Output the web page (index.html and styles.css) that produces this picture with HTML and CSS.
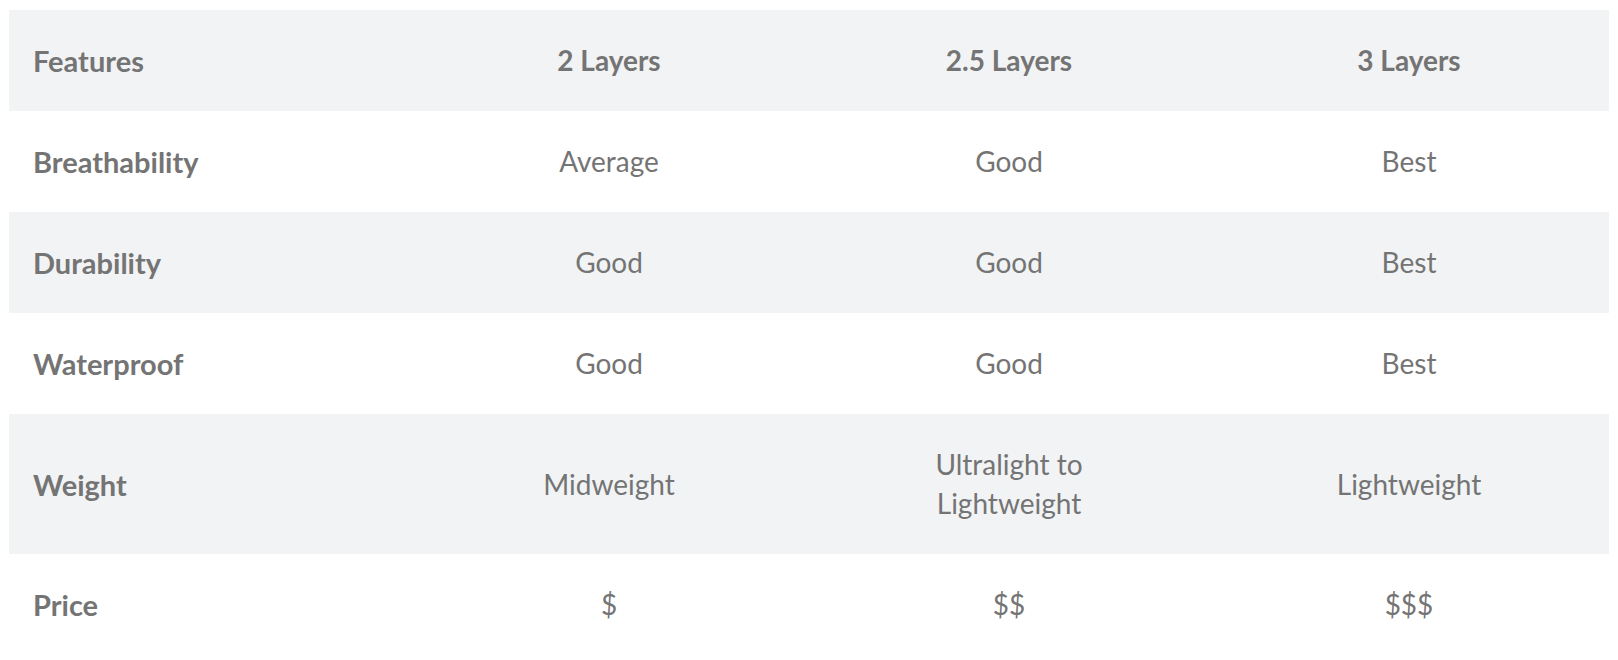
FILE: index.html
```html
<!DOCTYPE html>
<html>
<head>
<meta charset="utf-8">
<link rel="stylesheet" href="styles.css">
</head>
<body>
<table class="compare">
  <tr class="row shaded">
    <th class="feature">Features</th>
    <th class="val">2 Layers</th>
    <th class="val">2.5 Layers</th>
    <th class="val">3 Layers</th>
  </tr>
  <tr class="row">
    <td class="feature">Breathability</td>
    <td class="val">Average</td>
    <td class="val">Good</td>
    <td class="val">Best</td>
  </tr>
  <tr class="row shaded">
    <td class="feature">Durability</td>
    <td class="val">Good</td>
    <td class="val">Good</td>
    <td class="val">Best</td>
  </tr>
  <tr class="row">
    <td class="feature">Waterproof</td>
    <td class="val">Good</td>
    <td class="val">Good</td>
    <td class="val">Best</td>
  </tr>
  <tr class="row shaded">
    <td class="feature">Weight</td>
    <td class="val">Midweight</td>
    <td class="val">Ultralight to<br>Lightweight</td>
    <td class="val">Lightweight</td>
  </tr>
  <tr class="row">
    <td class="feature">Price</td>
    <td class="val">$</td>
    <td class="val">$$</td>
    <td class="val">$$$</td>
  </tr>
</table>
</body>
</html>
```
FILE: styles.css
```css
html, body {
  margin: 0;
  padding: 0;
  background: #ffffff;
}
body {
  padding: 10px 9px;
  font-family: Lato, "Open Sans", sans-serif;
  color: #747474;
}
.compare {
  width: 1600px;
  border-collapse: collapse;
  table-layout: fixed;
}
.row.shaded {
  background: #f2f3f5;
}
.compare th, .compare td {
  padding: 31px 24px;
  font-size: 28px;
  line-height: 39px;
  vertical-align: middle;
}
.compare .feature {
  text-align: left;
  font-weight: 700;
  font-size: 29px;
}
th.val {
  font-weight: 700;
  text-align: center;
}
td.val {
  font-weight: 400;
  text-align: center;
}
```
